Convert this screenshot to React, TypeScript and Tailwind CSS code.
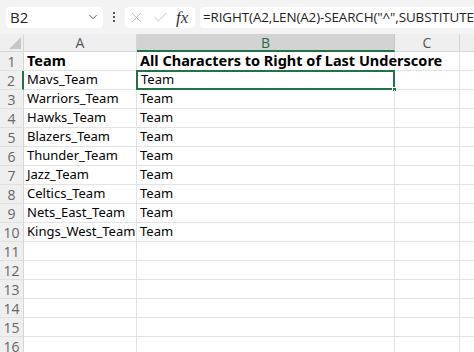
import { ChevronDown, X, Check } from 'lucide-react'

const ROWS: [string, string][] = [
  ['Team', 'All Characters to Right of Last Underscore'],
  ['Mavs_Team', 'Team'],
  ['Warriors_Team', 'Team'],
  ['Hawks_Team', 'Team'],
  ['Blazers_Team', 'Team'],
  ['Thunder_Team', 'Team'],
  ['Jazz_Team', 'Team'],
  ['Celtics_Team', 'Team'],
  ['Nets_East_Team', 'Team'],
  ['Kings_West_Team', 'Team'],
]

const UI = { fontFamily: '"Open Sans", "Noto Sans", sans-serif' }
const CELL = { fontFamily: '"Noto Sans", "Open Sans", sans-serif' }

function FormulaBar() {
  return (
    <div className="flex items-center h-[34px] bg-[#f3f3f3] pl-[6px]" style={UI}>
      <div className="flex items-center justify-between w-[97px] h-[21px] bg-white rounded-[4px] pl-[4px] pr-[3px]">
        <span className="text-[15px] text-[#222]">B2</span>
        <ChevronDown size={14} strokeWidth={1.5} className="text-[#555]" />
      </div>
      <div className="flex flex-col gap-[2px] ml-[10px] mr-[10px]">
        <span className="w-[2px] h-[2px] bg-[#555]" />
        <span className="w-[2px] h-[2px] bg-[#555]" />
        <span className="w-[2px] h-[2px] bg-[#555]" />
      </div>
      <div className="flex items-center gap-[7px] w-[70px] h-[21px] bg-white rounded-[4px] pl-[3px]">
        <X size={17} strokeWidth={1} className="text-[#aaa]" />
        <Check size={17} strokeWidth={1} className="text-[#aaa]" />
        <span className="text-[17px] italic text-[#333] leading-none" style={{ fontFamily: '"Liberation Serif", serif' }}>
          fx
        </span>
      </div>
      <div className="flex-1 ml-[5px] h-[21px] bg-white rounded-l-[4px] pl-[3px] flex items-center overflow-hidden whitespace-nowrap">
        <span className="text-[13.4px] tracking-[-0.1px] text-[#222]">=RIGHT(A2,LEN(A2)-SEARCH("^",SUBSTITUTE</span>
      </div>
    </div>
  )
}

export default function App() {
  const rowCount = 16
  return (
    <div className="w-[474px] h-[352px] overflow-hidden bg-white">
      <FormulaBar />
      <div
        className="grid grid-cols-[24px_113px_258px_65px_40px] grid-rows-[18px] auto-rows-[19px]"
        style={CELL}
      >
        {/* column headers */}
        <div className="bg-[#efefef] border-r border-b border-[#d6d6d6] relative overflow-hidden">
          <span className="absolute right-[2px] bottom-[2px] w-0 h-0 border-l-[12px] border-l-transparent border-b-[12px] border-b-[#c7c7c7]" />
        </div>
        <div className="bg-[#efefef] border-r border-b border-[#d6d6d6] flex items-center justify-center text-[14px] text-[#555]" style={UI}>A</div>
        <div className="bg-[#d3d3d3] border-r border-b-2 border-r-[#c4c4c4] border-b-[#217346] flex items-center justify-center text-[14px] text-[#1e6b40]" style={UI}>B</div>
        <div className="bg-[#efefef] border-r border-b border-[#d6d6d6] flex items-center justify-center text-[14px] text-[#555]" style={UI}>C</div>
        <div className="bg-[#efefef] border-b border-[#d6d6d6]" />

        {Array.from({ length: rowCount }, (_, i) => {
          const r = ROWS[i]
          const n = i + 1
          const sel = n === 2
          const bold = n === 1
          return [
            <div
              key={`h${n}`}
              className={`bg-[#efefef] flex items-center justify-center text-[14px] text-[#666] border-b border-[#e0e0e0] ${sel ? 'border-r-2 border-r-[#217346] bg-[#e2e2e2]' : 'border-r border-r-[#d6d6d6]'}`}
              style={UI}
            >
              {n}
            </div>,
            <div
              key={`a${n}`}
              className={`border-r border-b border-[#e3e3e3] flex items-center pl-[3px] text-black whitespace-nowrap overflow-visible ${bold ? 'font-bold text-[14.5px]' : 'text-[13px]'}`}
            >
              {r?.[0]}
            </div>,
            <div
              key={`b${n}`}
              className={`relative flex items-center pl-[3px] text-black whitespace-nowrap ${bold ? 'font-bold text-[14.5px]' : 'text-[13px]'} ${sel ? 'border-2 border-[#217346] -ml-[1px] -mt-[1px]' : 'border-r border-b border-[#e3e3e3]'}`}
            >
              {r?.[1]}
              {sel && <span className="absolute -right-[4px] -bottom-[4px] w-[5px] h-[5px] bg-[#217346] border border-white" />}
            </div>,
            <div key={`c${n}`} className="border-r border-b border-[#e3e3e3]" />,
            <div key={`d${n}`} className="border-b border-[#e3e3e3]" />,
          ]
        })}
      </div>
    </div>
  )
}
